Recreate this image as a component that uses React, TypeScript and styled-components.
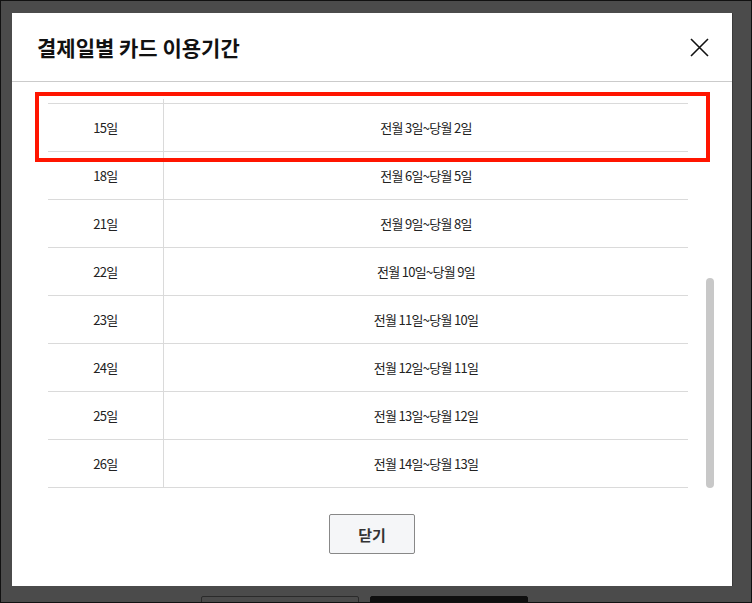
import { useLayoutEffect, useRef, useState } from 'react';
import styled, { createGlobalStyle } from 'styled-components';

const periods = [
  { day: '1일', range: '전전월 18일~전월 17일' },
  { day: '5일', range: '전전월 22일~전월 21일' },
  { day: '7일', range: '전전월 24일~전월 23일' },
  { day: '10일', range: '전전월 27일~전월 26일' },
  { day: '12일', range: '전전월 29일~전월 28일' },
  { day: '13일', range: '전월 1일~전월 말일' },
  { day: '14일', range: '전월 2일~당월 1일' },
  { day: '15일', range: '전월 3일~당월 2일' },
  { day: '18일', range: '전월 6일~당월 5일' },
  { day: '21일', range: '전월 9일~당월 8일' },
  { day: '22일', range: '전월 10일~당월 9일' },
  { day: '23일', range: '전월 11일~당월 10일' },
  { day: '24일', range: '전월 12일~당월 11일' },
  { day: '25일', range: '전월 13일~당월 12일' },
  { day: '26일', range: '전월 14일~당월 13일' },
];

export default function App() {
  const scrollRef = useRef<HTMLDivElement>(null);
  const [thumb, setThumb] = useState({ top: 0, height: 0 });

  const updateThumb = () => {
    const el = scrollRef.current;
    if (!el) return;
    const ratio = el.clientHeight / el.scrollHeight;
    setThumb({ top: el.scrollTop * ratio, height: el.clientHeight * ratio });
  };

  useLayoutEffect(() => {
    const el = scrollRef.current;
    if (el) el.scrollTop = el.scrollHeight;
    updateThumb();
  }, []);

  return (
    <>
      <GlobalStyle />
      <S.Page>
        <S.Modal>
          <S.Header>
            <S.Title>결제일별 카드 이용기간</S.Title>
            <S.CloseButton aria-label="닫기">
              <svg width="19" height="19" viewBox="0 0 19 19">
                <path d="M1 1L18 18M18 1L1 18" stroke="#111" strokeWidth="1.6" fill="none" />
              </svg>
            </S.CloseButton>
          </S.Header>
          <S.Body>
            <S.ScrollArea>
              <S.Scroll ref={scrollRef} onScroll={updateThumb}>
                {periods.map(({ day, range }) => (
                  <S.Row key={day}>
                    <S.DayCell>{day}</S.DayCell>
                    <S.RangeCell>{range}</S.RangeCell>
                  </S.Row>
                ))}
              </S.Scroll>
              <S.Thumb style={{ top: thumb.top, height: thumb.height }} />
            </S.ScrollArea>
            <S.Footer>
              <S.FooterButton>닫기</S.FooterButton>
            </S.Footer>
          </S.Body>
          <S.Highlight />
        </S.Modal>
        <S.BottomBar>
          <S.PageButton />
          <S.PageButton $dark />
        </S.BottomBar>
      </S.Page>
    </>
  );
}

const GlobalStyle = createGlobalStyle`
  html, body {
    margin: 0;
    padding: 0;
    overflow: hidden;
  }
  body {
    font-family: "Noto Sans CJK KR", "Noto Sans", sans-serif;
    color: #222;
  }
  * {
    box-sizing: border-box;
  }
`;

const S = {
  Page: styled.div`
    width: 100vw;
    height: 100vh;
    background: #4b4b4b;
    border: 1px solid #111;
    padding: 12px 0 0 11px;
    overflow: hidden;
    display: flex;
    flex-direction: column;
  `,

  Modal: styled.div`
    position: relative;
    flex-shrink: 0;
    width: 720px;
    height: 573px;
    background: #fff;
    box-shadow: 1px 0 0 #3a3a3a;
    display: flex;
    flex-direction: column;
  `,

  Header: styled.div`
    height: 69px;
    flex-shrink: 0;
    border-bottom: 1px solid #cbcbcb;
    display: flex;
    align-items: center;
    justify-content: space-between;
    padding: 0 23px 0 25px;
  `,

  Title: styled.h2`
    margin: 0;
    font-size: 21px;
    font-weight: 700;
    letter-spacing: 0;
    color: #111;
  `,

  CloseButton: styled.button`
    border: 0;
    background: none;
    padding: 0;
    width: 19px;
    height: 19px;
    display: flex;
    cursor: pointer;
  `,

  Body: styled.div`
    display: flex;
    flex-direction: column;
    padding: 17px 18px 0 36px;
  `,

  ScrollArea: styled.div`
    position: relative;
    height: 389px;
  `,

  Scroll: styled.div`
    height: 100%;
    overflow-y: scroll;
    padding-right: 26px;
    scrollbar-width: none;

    &::-webkit-scrollbar {
      display: none;
    }
  `,

  Thumb: styled.div`
    position: absolute;
    right: 0;
    width: 8px;
    background: #c8c8c8;
    border-radius: 4px;
  `,

  Row: styled.div`
    display: grid;
    grid-template-columns: 116px 1fr;
    height: 48px;
    border-bottom: 1px solid #dadada;
    font-size: 13px;
    letter-spacing: -0.7px;
    color: #222;
  `,

  DayCell: styled.div`
    display: flex;
    align-items: center;
    justify-content: center;
    border-right: 1px solid #dadada;
  `,

  RangeCell: styled.div`
    display: flex;
    align-items: center;
    justify-content: center;
  `,

  Footer: styled.div`
    display: flex;
    justify-content: center;
    padding: 26px 18px 0 0;
  `,

  FooterButton: styled.button`
    width: 86px;
    height: 40px;
    background: #f5f6f8;
    border: 1px solid #888;
    border-radius: 2px;
    font-family: "Noto Sans CJK KR", sans-serif;
    font-size: 15px;
    font-weight: 700;
    color: #333;
    cursor: pointer;
  `,

  Highlight: styled.div`
    position: absolute;
    left: 23px;
    top: 79px;
    width: 675px;
    height: 70px;
    border: 4px solid #ff1500;
    pointer-events: none;
  `,

  BottomBar: styled.div`
    display: flex;
    flex-shrink: 0;
    gap: 11px;
    margin-top: 10px;
    padding-left: 189px;
  `,

  PageButton: styled.div<{ $dark?: boolean }>`
    width: 158px;
    height: 40px;
    flex-shrink: 0;
    border-radius: 2px;
    background: ${({ $dark }) => ($dark ? '#0f0f0f' : '#4b4b4b')};
    border: 1px solid ${({ $dark }) => ($dark ? '#0f0f0f' : '#2a2a2a')};
  `,
};
